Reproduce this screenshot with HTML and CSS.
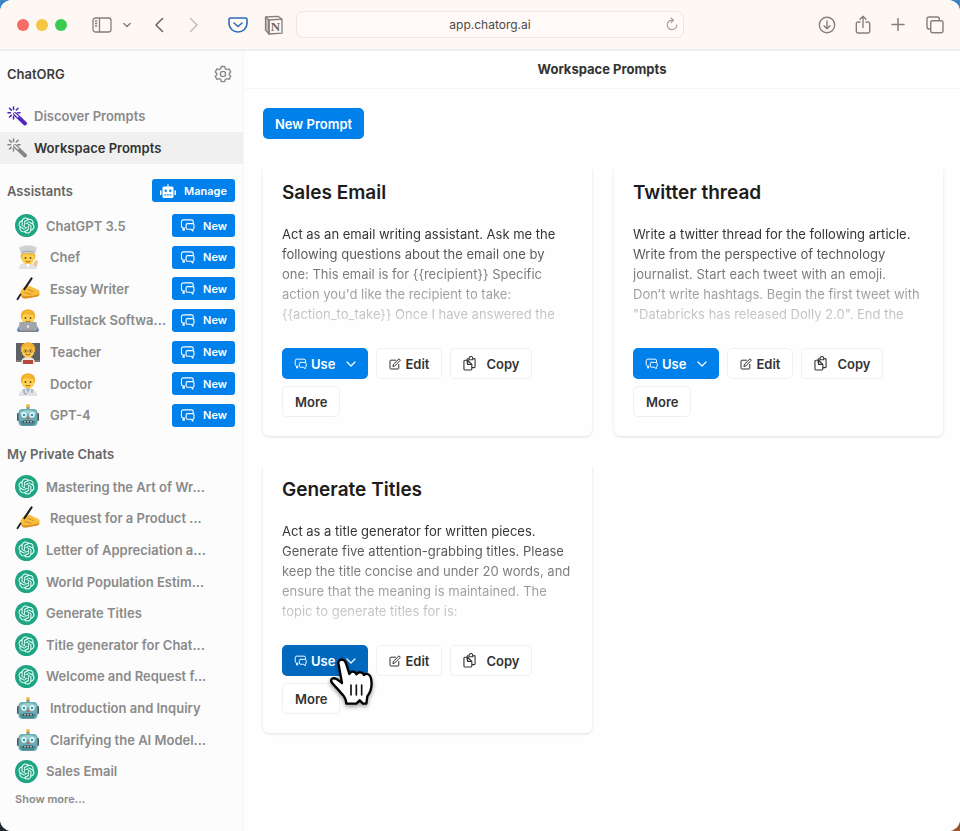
FILE: index.html
```html
<!DOCTYPE html>
<html lang="en">
<head>
    <meta charset="UTF-8">
    <meta name="viewport" content="width=device-width, initial-scale=1.0">
    <title>Workspace Prompts - ChatORG</title>
    <link rel="stylesheet" href="styles.css">
</head>
<body>

    <!-- Shared icons -->
    <svg class="sprite" aria-hidden="true">
        <symbol id="openai" viewBox="0 0 36 36">
            <circle cx="18" cy="18" r="18" fill="#1fa583"/>
            <path transform="translate(5.4 5.4) scale(1.05)" fill="#e8fff8" d="M22.2819 9.8211a5.9847 5.9847 0 0 0-.5157-4.9108 6.0462 6.0462 0 0 0-6.5098-2.9A6.0651 6.0651 0 0 0 4.9807 4.1818a5.9847 5.9847 0 0 0-3.9977 2.9 6.0462 6.0462 0 0 0 .7427 7.0966 5.98 5.98 0 0 0 .511 4.9107 6.051 6.051 0 0 0 6.5146 2.9001A5.9847 5.9847 0 0 0 13.2599 24a6.0557 6.0557 0 0 0 5.7718-4.2058 5.9894 5.9894 0 0 0 3.9977-2.9001 6.0557 6.0557 0 0 0-.7475-7.0729zm-9.022 12.6081a4.4755 4.4755 0 0 1-2.8764-1.0408l.1419-.0804 4.7783-2.7582a.7948.7948 0 0 0 .3927-.6813v-6.7369l2.02 1.1686a.071.071 0 0 1 .038.052v5.5826a4.504 4.504 0 0 1-4.4945 4.4944zm-9.6607-4.1254a4.4708 4.4708 0 0 1-.5346-3.0137l.142.0852 4.783 2.7582a.7712.7712 0 0 0 .7806 0l5.8428-3.3685v2.3324a.0804.0804 0 0 1-.0332.0615L9.74 19.9502a4.4992 4.4992 0 0 1-6.1408-1.6464zM2.3408 7.8956a4.485 4.485 0 0 1 2.3655-1.9728V11.6a.7664.7664 0 0 0 .3879.6765l5.8144 3.3543-2.0201 1.1685a.0757.0757 0 0 1-.071 0l-4.8303-2.7865A4.504 4.504 0 0 1 2.3408 7.872zm16.5963 3.8558L13.1038 8.364 15.1192 7.2a.0757.0757 0 0 1 .071 0l4.8303 2.7913a4.4944 4.4944 0 0 1-.6765 8.1042v-5.6772a.79.79 0 0 0-.407-.667zm2.0107-3.0231l-.142-.0852-4.7735-2.7818a.7759.7759 0 0 0-.7854 0L9.409 9.2297V6.8974a.0662.0662 0 0 1 .0284-.0615l4.8303-2.7866a4.4992 4.4992 0 0 1 6.6802 4.66zM8.3065 12.863l-2.02-1.1638a.0804.0804 0 0 1-.038-.0567V6.0742a4.4992 4.4992 0 0 1 7.3757-3.4537l-.142.0805L8.704 5.459a.7948.7948 0 0 0-.3927.6813zm1.0976-2.3654l2.602-1.4998 2.6069 1.4998v2.9994l-2.5974 1.4997-2.6067-1.4997Z"/>
        </symbol>
        <symbol id="chat" viewBox="0 0 16 14">
            <g fill="none" stroke="currentColor" stroke-width="1.2" stroke-linejoin="round" stroke-linecap="round">
                <path d="M4.500 9.500v2.500L3.200 12V9.500A2 2 0 0 1 1.500 7.500V3a2 2 0 0 1 2-2h8.700a2 2 0 0 1 2 2v1.200"/>
                <path d="M8 5h5.500A1.500 1.500 0 0 1 15 6.500v3a1.500 1.500 0 0 1-1.200 1.500v2l-2-2H8a1.500 1.500 0 0 1-1.500-1.500v-3A1.500 1.500 0 0 1 8 5z"/>
            </g>
        </symbol>
        <symbol id="chevron" viewBox="0 0 10 6">
            <path d="M1 1l4 4 4-4" fill="none" stroke="currentColor" stroke-width="1.2" stroke-linecap="round" stroke-linejoin="round"/>
        </symbol>
        <symbol id="edit" viewBox="0 0 12 12">
            <g fill="none" stroke="currentColor" stroke-linecap="round" stroke-linejoin="round">
                <path d="M6.500 2.200H1.800a.8.8 0 0 0-.8.8v7.200a.8.8 0 0 0 .8.8H9a.8.8 0 0 0 .8-.8V6.500"/>
                <path d="M4 8.200l.5-2L10 .8l1.400 1.400L6 7.700z"/>
            </g>
        </symbol>
        <symbol id="copy" viewBox="0 0 14 16">
            <g fill="none" stroke="currentColor" stroke-width="1.200" stroke-linejoin="round">
                <path d="M4.500 4.500H2a1 1 0 0 0-1 1v8.500a1 1 0 0 0 1 1h6.500a1 1 0 0 0 1-1v-1.500"/>
                <path d="M6 2.800H5.500a1 1 0 0 0-1 1V8M11 2.800h1a1 1 0 0 1 1 1v7.700a1 1 0 0 1-1 1H9.500V9L5 4.500"/>
                <path d="M6.500 4V2.500a2 2 0 0 1 4 0V4zM5 4.800V9h4.500"/>
            </g>
        </symbol>
        <symbol id="wand" viewBox="0 0 20 20">
            <path d="M8 8l10 9.500" stroke="currentColor" stroke-width="3.800" stroke-linecap="round"/>
            <path d="M7.500 7.500l3.500 3.300" stroke="#fff" stroke-width="1.200" stroke-linecap="round"/>
            <path d="M6.500 1v2.500M2.500 2.300l1.800 1.800M11 2.300L9.300 4M1 6.700h2.500M2.500 11l1.800-1.700M6.500 10.500V13M10.700 6.700H13" stroke="currentColor" stroke-width="1.600" stroke-linecap="round"/>
        </symbol>
        <symbol id="robot" viewBox="0 0 24 24">
            <circle cx="12" cy="3" r="2" fill="#f5b942"/>
            <path d="M10.500 4h3v4h-3z" fill="#84939a"/>
            <rect x="1" y="10" width="3" height="8" rx="1" fill="#4e5558"/>
            <rect x="20" y="10" width="3" height="8" rx="1" fill="#4e5558"/>
            <rect x="2.500" y="6" width="19" height="17" rx="4" fill="#68adb3"/>
            <path d="M4 9q8-4 16 0v2H4z" fill="#9ccfd2"/>
            <path d="M4 18h16q-1 4-4 4.500H7Q4 21 4 18z" fill="#4c8b94"/>
            <circle cx="8" cy="12" r="2.700" fill="#eefcff"/>
            <circle cx="16" cy="12" r="2.700" fill="#eefcff"/>
            <circle cx="8" cy="12" r="1.300" fill="#3c96a3"/>
            <circle cx="16" cy="12" r="1.300" fill="#3c96a3"/>
            <path d="M12 13l1.500 3h-3z" fill="#d4574c"/>
            <rect x="7" y="17.500" width="10" height="2.500" rx="1" fill="#34454c"/>
            <path d="M9 18v1.600M12 18v1.600M15 18v1.600" stroke="#e8f2f3" stroke-width="1.300"/>
        </symbol>
        <symbol id="writing" viewBox="0 0 24 24">
            <path d="M4 17.500Q5 11 9.500 9.300Q13 8 16 10l5 2.500q2.500.5 2.500 2v3q0 2-4 2.300l-7 1.200q-3 1-5.500-.3z" fill="#f7bd3d"/>
            <path d="M5 18.500q8 2.300 18-1.500q0 2.500-4 3l-7 1.300q-3 .7-5.500-.3z" fill="#dc912a"/>
            <path d="M12 12.500l5 2M9 15.500l6 2" stroke="#cc8428" stroke-width=".9" stroke-linecap="round"/>
            <path d="M15.500 1.500L8.500 12" stroke="#1d1d22" stroke-width="2.200" stroke-linecap="round"/>
            <path d="M4.500 17.500l-3 4.700" stroke="#1d1d22" stroke-width="1.800" stroke-linecap="round"/>
        </symbol>
        <symbol id="face" viewBox="0 0 24 24">
            <path d="M5 11Q3.500 1.500 12 1.200Q20.500 1.500 19 11z" fill="#efae2e"/>
            <ellipse cx="12" cy="10" rx="6.300" ry="6.800" fill="#fcd04c"/>
            <path d="M5.500 9Q5 3.500 12 3.200Q19 3.500 18.500 9L16.500 7Q12 7 10.500 5.500Q9 7 7 7z" fill="#f3b532"/>
            <circle cx="9.500" cy="10" r=".9" fill="#6b4423"/>
            <circle cx="14.500" cy="10" r=".9" fill="#6b4423"/>
            <path d="M10 13.500q2 1.300 4 0" stroke="#a45a26" fill="none" stroke-linecap="round"/>
        </symbol>
        <symbol id="chef" viewBox="0 0 24 24">
            <path d="M3 24q0-6 7-6h4q7 0 7 6z" fill="#e1e2e6"/>
            <use href="#face" y="3" width="24" height="24"/>
            <path d="M5 9L3.500 4Q2.500 1 6.500 1.500Q9-.5 12 .8Q15-.5 17.500 1.500Q21.500 1 20.500 4L19 9q-7-2-14 0z" fill="#cfd0d4"/>
            <path d="M6 7q6-1.500 12 0" stroke="#a6a8ad" fill="none"/>
            <path d="M10 19l2 4 2-4" fill="#fff"/>
            <path d="M17.500 18.500l2-3.500 2.500 1-1 5-2.500.5z" fill="#efc294"/>
        </symbol>
        <symbol id="coder" viewBox="0 0 24 24">
            <path d="M1 23q1-7 8-7h6q7 0 8 7z" fill="#3975bb"/>
            <use href="#face" width="24" height="24"/>
            <path d="M3.500 14h17l1 9.500h-19z" fill="#a1a5ac"/>
            <circle cx="12" cy="18.500" r="1.200" fill="#eceef0"/>
            <path d="M2 22.500h20V24H2z" fill="#7b8089"/>
        </symbol>
        <symbol id="teacher" viewBox="0 0 24 24">
            <path d="M0 3h24v17H0z" fill="#5d6165"/>
            <path d="M0 20h24v2H0z" fill="#82756b"/>
            <path d="M5 24q0-7 6-7h2q6 0 6 7z" fill="#efe4dc"/>
            <path d="M7 20h10v4H7z" fill="#b34a3a"/>
            <use href="#face" y="1" width="24" height="24"/>
            <circle cx="9.500" cy="11" r="2" fill="none" stroke="#9a6a2c" stroke-width=".6"/>
            <circle cx="14.500" cy="11" r="2" fill="none" stroke="#9a6a2c" stroke-width=".6"/>
        </symbol>
        <symbol id="doctor" viewBox="0 0 24 24">
            <path d="M3 24q0-7 7-7.500h4q7 .5 7 7.500z" fill="#dfe1e5"/>
            <path d="M9.500 16h5L12 21z" fill="#8eb8d9"/>
            <use href="#face" width="24" height="24"/>
            <path d="M8 17v4q1.500 2 3 0M16 17v4" stroke="#858c95" fill="none"/>
        </symbol>
    </svg>

    <div class="window">

        <!-- Browser toolbar -->
        <header class="toolbar">
            <div class="toolbar-left">
                <span class="dot dot-red"></span>
                <span class="dot dot-yellow"></span>
                <span class="dot dot-green"></span>
                <button class="tool tool-panel" aria-label="Sidebar">
                    <svg width="20" height="16" viewBox="0 0 20 16" fill="none" stroke="currentColor" stroke-width="1.300"><rect x="1" y="1" width="18" height="14" rx="2.500"/><path d="M7.500 1v14M3 4h2.200M3 6.500h2.200M3 9h2.200"/></svg>
                </button>
                <button class="tool tool-menu" aria-label="Tab groups">
                    <svg width="8" height="6" viewBox="0 0 10 6"><path d="M1 1l4 4 4-4" fill="none" stroke="currentColor" stroke-width="1.800" stroke-linecap="round" stroke-linejoin="round"/></svg>
                </button>
                <button class="tool tool-back" aria-label="Back">
                    <svg width="10" height="16" viewBox="0 0 10 16" fill="none" stroke="currentColor" stroke-width="1.600" stroke-linecap="round" stroke-linejoin="round"><path d="M8.500 1.500L2 8l6.500 6.500"/></svg>
                </button>
                <button class="tool tool-forward" aria-label="Forward">
                    <svg width="10" height="16" viewBox="0 0 10 16" fill="none" stroke="currentColor" stroke-width="1.600" stroke-linecap="round" stroke-linejoin="round"><path d="M1.500 1.500L8 8l-6.500 6.500"/></svg>
                </button>
                <button class="tool tool-pocket" aria-label="Save to Pocket">
                    <svg width="20" height="18" viewBox="0 0 20 18" fill="none" stroke="currentColor" stroke-width="1.600" stroke-linecap="round" stroke-linejoin="round"><path d="M2.500 2h15A1.500 1.500 0 0 1 19 3.500V7.500a9 8.500 0 0 1-18 0V3.500A1.500 1.500 0 0 1 2.500 2z"/><path d="M6 7l4 3.500L14 7"/></svg>
                </button>
                <button class="tool tool-notion" aria-label="Save to Notion">
                    <svg width="20" height="20" viewBox="0 0 20 20" fill="none" stroke="currentColor" stroke-width="1.300" stroke-linejoin="round"><path d="M5 5l13-.8v14L5 19z"/><path d="M5 5L1.500 2v13L5 19z" fill="currentColor" fill-opacity=".5"/><path d="M1.500 2L14 1.300l4 2.900"/><text class="notion-letter" x="11.500" y="16" text-anchor="middle">N</text></svg>
                </button>
            </div>
            <div class="address">
                <input type="text" value="app.chatorg.ai" aria-label="Address">
                <button class="tool reload" aria-label="Reload">
                    <svg width="12" height="14" viewBox="0 0 12 14" fill="none" stroke="currentColor" stroke-width="1.100" stroke-linecap="round" stroke-linejoin="round"><path d="M7 3.200A4.800 4.800 0 1 0 10.800 8"/><path d="M5 .8l2.500 2.400L5 5.600"/></svg>
                </button>
            </div>
            <div class="toolbar-right">
                <button class="tool" aria-label="Downloads">
                    <svg width="20" height="20" viewBox="0 0 20 20" fill="none" stroke="currentColor" stroke-width="1.400" stroke-linecap="round" stroke-linejoin="round"><circle cx="10" cy="10" r="7.700"/><path d="M10 6v7.500M7 10.700l3 3 3-3"/></svg>
                </button>
                <button class="tool" aria-label="Share">
                    <svg width="20" height="20" viewBox="0 0 20 20" fill="none" stroke="currentColor" stroke-width="1.400" stroke-linecap="round" stroke-linejoin="round"><path d="M7 7H5a1.700 1.700 0 0 0-1.700 1.700v7.600A1.700 1.700 0 0 0 5 18h10a1.700 1.700 0 0 0 1.700-1.700V8.700A1.700 1.700 0 0 0 15 7h-2M10 12.500V1.500M7 4.300l3-3 3 3"/></svg>
                </button>
                <button class="tool" aria-label="New tab">
                    <svg width="20" height="20" viewBox="0 0 20 20" fill="none" stroke="currentColor" stroke-width="1.500" stroke-linecap="round"><path d="M9 3.500v12M3 9.500h12"/></svg>
                </button>
                <button class="tool" aria-label="Tab overview">
                    <svg width="20" height="20" viewBox="0 0 20 20" fill="none" stroke="currentColor" stroke-width="1.400" stroke-linejoin="round"><rect x="5.700" y="5.700" width="12.300" height="12" rx="2"/><path d="M5.700 14H4a2 2 0 0 1-2-2V4a2 2 0 0 1 2-2h8.300a2 2 0 0 1 2 2v1.700"/></svg>
                </button>
            </div>
        </header>

        <div class="app">

            <!-- Sidebar -->
            <aside class="sidebar">
                <div class="side-head">
                    <span class="brand">ChatORG</span>
                    <button class="tool" aria-label="Settings">
                        <svg width="18" height="18" viewBox="0 0 18 18" fill="none" stroke="currentColor" stroke-width="1.400" stroke-linejoin="round"><path d="M7.300 1.500h3.400l.5 2.200 1.600.9 2.200-.7 1.700 3-1.500 1.600v1.300l1.500 1.500-1.700 3-2.200-.7-1.600.9-.5 2.100H7.300l-.5-2.100-1.600-.9-2.200.7-1.700-3 1.500-1.600V8.500L1.300 6.900l1.700-3 2.200.7 1.600-.9z"/><circle cx="9" cy="9" r="2.600"/></svg>
                    </button>
                </div>

                <nav class="nav">
                    <a href="#"><svg class="wand wand-purple"><use href="#wand"/></svg>Discover Prompts</a>
                    <a href="#" class="active"><svg class="wand"><use href="#wand"/></svg>Workspace Prompts</a>
                </nav>

                <div class="section-head">
                    <h2>Assistants</h2>
                    <button class="btn btn-small">
                        <svg width="16" height="14" viewBox="0 0 16 14"><path d="M7.500 0h1v2.500H12A1.500 1.500 0 0 1 13.500 4v8.500A1.500 1.500 0 0 1 12 14H4a1.500 1.500 0 0 1-1.500-1.500V4A1.500 1.500 0 0 1 4 2.500h3.500zM0 6.500h1.500V11H0zM14.500 6.500H16V11h-1.500z" fill="#fff"/><circle cx="5.700" cy="6.700" r="1.200" fill="#0080ea"/><circle cx="10.300" cy="6.700" r="1.200" fill="#0080ea"/><path d="M4.500 10.800h7" stroke="#0080ea" stroke-width="1.200" stroke-dasharray="1.700 .9"/></svg>
                        Manage
                    </button>
                </div>
                <ul class="list assistants">
                    <li><a href="#"><svg class="logo"><use href="#openai"/></svg>ChatGPT 3.5</a><button class="btn btn-small"><svg width="15" height="13"><use href="#chat"/></svg>New</button></li>
                    <li><a href="#"><svg class="emoji"><use href="#chef"/></svg>Chef</a><button class="btn btn-small"><svg width="15" height="13"><use href="#chat"/></svg>New</button></li>
                    <li><a href="#"><svg class="emoji"><use href="#writing"/></svg>Essay Writer</a><button class="btn btn-small"><svg width="15" height="13"><use href="#chat"/></svg>New</button></li>
                    <li><a href="#"><svg class="emoji"><use href="#coder"/></svg>Fullstack Softwa...</a><button class="btn btn-small"><svg width="15" height="13"><use href="#chat"/></svg>New</button></li>
                    <li><a href="#"><svg class="emoji"><use href="#teacher"/></svg>Teacher</a><button class="btn btn-small"><svg width="15" height="13"><use href="#chat"/></svg>New</button></li>
                    <li><a href="#"><svg class="emoji"><use href="#doctor"/></svg>Doctor</a><button class="btn btn-small"><svg width="15" height="13"><use href="#chat"/></svg>New</button></li>
                    <li><a href="#"><svg class="emoji"><use href="#robot"/></svg>GPT-4</a><button class="btn btn-small"><svg width="15" height="13"><use href="#chat"/></svg>New</button></li>
                </ul>

                <div class="section-head">
                    <h2>My Private Chats</h2>
                </div>
                <ul class="list chats">
                    <li><a href="#"><svg class="logo"><use href="#openai"/></svg>Mastering the Art of Wr...</a></li>
                    <li><a href="#"><svg class="emoji"><use href="#writing"/></svg>Request for a Product ...</a></li>
                    <li><a href="#"><svg class="logo"><use href="#openai"/></svg>Letter of Appreciation a...</a></li>
                    <li><a href="#"><svg class="logo"><use href="#openai"/></svg>World Population Estim...</a></li>
                    <li><a href="#"><svg class="logo"><use href="#openai"/></svg>Generate Titles</a></li>
                    <li><a href="#"><svg class="logo"><use href="#openai"/></svg>Title generator for Chat...</a></li>
                    <li><a href="#"><svg class="logo"><use href="#openai"/></svg>Welcome and Request f...</a></li>
                    <li><a href="#"><svg class="emoji"><use href="#robot"/></svg>Introduction and Inquiry</a></li>
                    <li><a href="#"><svg class="emoji"><use href="#robot"/></svg>Clarifying the AI Model...</a></li>
                    <li><a href="#"><svg class="logo"><use href="#openai"/></svg>Sales Email</a></li>
                </ul>
                <a href="#" class="show-more">Show more...</a>
            </aside>

            <!-- Prompts -->
            <main class="main">
                <h1>Workspace Prompts</h1>
                <div class="content">
                    <button class="btn">New Prompt</button>

                    <div class="cards">
                        <article class="card">
                            <h3>Sales Email</h3>
                            <p>Act as an email writing assistant. Ask me the<br>following questions about the email one by<br>one: This email is for {{recipient}} Specific<br>action you'd like the recipient to take:<br>{{action_to_take}} Once I have answered the</p>
                            <div class="actions">
                                <button class="btn btn-use"><svg width="13" height="12"><use href="#chat"/></svg>Use<svg class="caret"><use href="#chevron"/></svg></button>
                                <button class="btn btn-light"><svg width="12" height="12"><use href="#edit"/></svg>Edit</button>
                                <button class="btn btn-light btn-copy"><svg width="13" height="15"><use href="#copy"/></svg>Copy</button>
                                <button class="btn btn-light">More</button>
                            </div>
                        </article>

                        <article class="card">
                            <h3>Twitter thread</h3>
                            <p>Write a twitter thread for the following article.<br>Write from the perspective of technology<br>journalist. Start each tweet with an emoji.<br>Don’t write hashtags. Begin the first tweet with<br>"Databricks has released Dolly 2.0". End the</p>
                            <div class="actions">
                                <button class="btn btn-use"><svg width="13" height="12"><use href="#chat"/></svg>Use<svg class="caret"><use href="#chevron"/></svg></button>
                                <button class="btn btn-light"><svg width="12" height="12"><use href="#edit"/></svg>Edit</button>
                                <button class="btn btn-light btn-copy"><svg width="13" height="15"><use href="#copy"/></svg>Copy</button>
                                <button class="btn btn-light">More</button>
                            </div>
                        </article>

                        <article class="card">
                            <h3>Generate Titles</h3>
                            <p>Act as a title generator for written pieces.<br>Generate five attention-grabbing titles. Please<br>keep the title concise and under 20 words, and<br>ensure that the meaning is maintained. The<br>topic to generate titles for is:</p>
                            <div class="actions">
                                <button class="btn btn-use hovered"><svg width="13" height="12"><use href="#chat"/></svg>Use<svg class="caret"><use href="#chevron"/></svg></button>
                                <button class="btn btn-light"><svg width="12" height="12"><use href="#edit"/></svg>Edit</button>
                                <button class="btn btn-light btn-copy"><svg width="13" height="15"><use href="#copy"/></svg>Copy</button>
                                <button class="btn btn-light">More</button>
                                <svg class="pointer" viewBox="0 0 135 150">
                                    <path d="M29 23C23 6 46 2 51 19L61 51C66 41 78 42 82 52C88 43 101 44 105 54C113 47 124 52 126 64C130 84 126 104 115 118L112 140L102 140L92 130L82 140L52 140C51 124 46 118 38 110C28 98 16 86 9 77C2 68 11 60 23 66L39 78Z" fill="#fff" stroke="#000" stroke-width="7" stroke-linejoin="round"/>
                                    <path d="M66 84v30M82 84v30M98 84v30" stroke="#111" stroke-width="5" stroke-linecap="round"/>
                                </svg>
                            </div>
                        </article>
                    </div>
                </div>
            </main>
        </div>
    </div>

</body>
</html>
```
FILE: styles.css
```css
* {
    box-sizing: border-box;
}

/* Desktop showing behind the window corners */
html {
    min-height: 100%;
    background: linear-gradient(to right, #22282d 50%, #9a5530 50%) bottom / 100% 50% no-repeat, #3d86c6;
}

body {
    margin: 0;
    font-family: Inter, "Liberation Sans", sans-serif;
    font-size: 13px;
    color: #333;
}

a {
    color: inherit;
    text-decoration: none;
}

button, input {
    font: inherit;
}

.sprite {
    display: block;
    width: 0;
    height: 0;
}

.window {
    min-height: 100vh;
    display: flex;
    flex-direction: column;
    background-color: #fff;
    border-radius: 12px;
    overflow: hidden;
}

/* Browser toolbar */
.toolbar {
    display: grid;
    grid-template-columns: 296px minmax(200px, 388px) 1fr;
    align-items: center;
    height: 51px;
    background-color: #fef8f4;
    border-bottom: 2px solid #efedeb;
    color: #857f7b;
}

.toolbar-left, .toolbar-right {
    display: flex;
    align-items: center;
}

.toolbar-left {
    padding-left: 17px;
}

.toolbar-right {
    justify-content: flex-end;
    gap: 16px;
    padding-right: 15px;
}

.dot {
    width: 12px;
    height: 12px;
    margin-right: 7px;
    border-radius: 50%;
}

.dot-red {
    background-color: #f56c66;
}

.dot-yellow {
    background-color: #f5c543;
}

.dot-green {
    background-color: #3acb55;
}

.tool {
    display: flex;
    padding: 0;
    border: none;
    background: none;
    color: inherit;
    cursor: pointer;
}

.tool-panel {
    margin-left: 18px;
}

.tool-menu {
    margin-left: 11px;
}

.tool-back {
    margin-left: 23px;
    color: #6d6865;
}

.tool-forward {
    margin-left: 25px;
    color: #c5bfbb;
}

.tool-pocket {
    margin-left: 29px;
    color: #2d6cb8;
}

.tool-notion {
    margin-left: 16px;
}

.notion-letter {
    font-family: "Liberation Serif", serif;
    font-size: 13px;
    font-weight: bold;
    fill: #6d6865;
    stroke: none;
}

.address {
    position: relative;
}

.address input {
    display: block;
    width: 100%;
    height: 27px;
    padding: 0 24px;
    border: 1px solid #ebe6e2;
    border-radius: 7px;
    background-color: #fffaf7;
    color: #4c4845;
    font-size: 12px;
    text-align: center;
}

.reload {
    position: absolute;
    top: 6px;
    right: 6px;
    color: #a09a96;
}

/* Sidebar */
.app {
    flex: 1;
    display: flex;
}

.sidebar {
    flex: none;
    width: 244px;
    background-color: #fcfcfc;
    border-right: 1px solid #f4f4f4;
    font-weight: 600;
    color: #8a8a8a;
}

.side-head {
    display: flex;
    justify-content: space-between;
    align-items: center;
    height: 46px;
    padding: 0 11px 0 7px;
}

.brand {
    color: #3c3c3c;
}

.nav {
    margin-top: 3px;
}

.nav a {
    display: flex;
    align-items: center;
    height: 32px;
    padding-left: 7px;
}

.nav .active {
    background-color: #f0f0f0;
    color: #333;
}

.wand {
    width: 20px;
    height: 20px;
    margin-right: 7px;
    color: #858585;
}

.wand-purple {
    color: #5428ba;
}

.section-head {
    display: flex;
    justify-content: space-between;
    align-items: center;
    min-height: 23px;
    margin: 15px 8px 8px 7px;
}

.section-head h2 {
    margin: 0;
    font-size: 13px;
    font-weight: 600;
    color: #666;
}

.list {
    display: grid;
    grid-auto-rows: 1fr;
    margin: 0;
    padding: 0 8px 0 15px;
    list-style: none;
}

.assistants {
    height: 221px;
}

.assistants + .section-head {
    margin-top: 11px;
    margin-bottom: 6px;
}

.chats {
    height: 316px;
}

.list li {
    display: flex;
    justify-content: space-between;
    align-items: center;
}

.list a {
    display: flex;
    align-items: center;
    white-space: nowrap;
}

.list .btn {
    flex: none;
}

.logo {
    width: 23px;
    height: 23px;
    margin-right: 8px;
}

.emoji {
    width: 26px;
    height: 24px;
    margin-right: 9px;
}

.show-more {
    display: block;
    margin: 4px 15px 20px;
    font-size: 11px;
    line-height: 16px;
}

/* Buttons */
.btn {
    display: inline-flex;
    align-items: center;
    justify-content: center;
    height: 31px;
    padding: 0 12px;
    border: none;
    border-radius: 5px;
    background-color: #0080ea;
    color: #fff;
    font-size: 13px;
    font-weight: 600;
    cursor: pointer;
}

.btn-small {
    height: 23px;
    gap: 8px;
    padding: 0 8px;
    border-radius: 3px;
    font-size: 11px;
}

.btn-use {
    gap: 4px;
}

.btn-use.hovered {
    background-color: #0069be;
}

.caret {
    width: 10px;
    height: 6px;
    margin-left: 7px;
}

.btn-light {
    gap: 4px;
    border: 1px solid #f0f0f0;
    background-color: #fff;
    color: #333;
}

.btn-copy {
    gap: 10px;
}

/* Main area */
.main {
    flex: 1;
    min-width: 0;
    background-color: #fefefe;
}

h1 {
    margin: 0;
    height: 38px;
    border-bottom: 1px solid #f6f6f6;
    font-size: 13px;
    font-weight: 700;
    line-height: 36px;
    text-align: center;
}

.content {
    padding: 19px 17px 24px 19px;
}

.cards {
    display: grid;
    grid-template-columns: 1fr 1fr;
    gap: 25px 22px;
    margin-top: 25px;
}

.card {
    padding: 17px 19px 19px;
    border-radius: 6px;
    background-color: #fefefe;
    box-shadow: 0 1px 3px rgba(0, 0, 0, 0.12);
    clip-path: inset(5px -4px -4px -4px);
}

.card h3 {
    margin: 0 0 19px;
    font-size: 19px;
    font-weight: 600;
    line-height: 24px;
    color: #1c1c1c;
}

.card p {
    margin: 0 0 24px;
    line-height: 20px;
    white-space: nowrap;
    -webkit-mask-image: linear-gradient(#000 10%, rgba(0, 0, 0, 0.2));
    mask-image: linear-gradient(#000 10%, rgba(0, 0, 0, 0.2));
}

.actions {
    position: relative;
    display: flex;
    flex-wrap: wrap;
    gap: 7px 8px;
}

/* Hand cursor over the hovered button */
.pointer {
    position: absolute;
    top: 12px;
    left: 47px;
    width: 45px;
    height: 50px;
    filter: drop-shadow(0 2px 2px rgba(0, 0, 0, 0.4));
}
```
